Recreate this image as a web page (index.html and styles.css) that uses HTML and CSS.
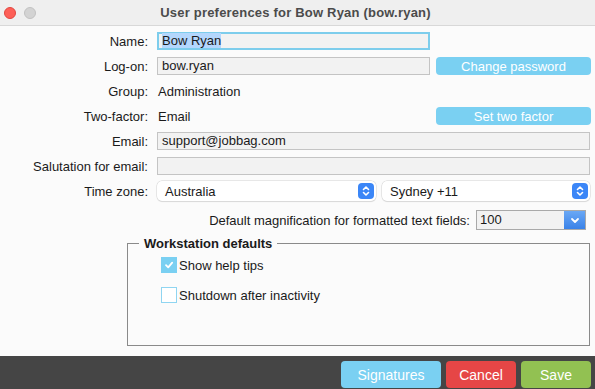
FILE: index.html
```html
<!DOCTYPE html>
<html lang="en">
<head>
    <meta charset="UTF-8">
    <title>User preferences</title>
    <link rel="stylesheet" href="styles.css">
</head>
<body>
    <div class="window">
        <div class="titlebar">
            <div class="lights">
                <span class="light close"></span>
                <span class="light idle"></span>
            </div>
            <div class="title">User preferences for Bow Ryan (bow.ryan)</div>
        </div>

        <div class="content">
            <div class="row">
                <label class="label">Name:</label>
                <div class="field short focused"><span class="selected">Bow Ryan</span></div>
            </div>
            <div class="row">
                <label class="label">Log-on:</label>
                <div class="field short">bow.ryan</div>
                <button class="btn blue side">Change password</button>
            </div>
            <div class="row">
                <label class="label">Group:</label>
                <div class="value">Administration</div>
            </div>
            <div class="row">
                <label class="label">Two-factor:</label>
                <div class="value short">Email</div>
                <button class="btn blue side">Set two factor</button>
            </div>
            <div class="row">
                <label class="label">Email:</label>
                <div class="field wide">support@jobbag.com</div>
            </div>
            <div class="row">
                <label class="label">Salutation for email:</label>
                <div class="field wide"></div>
            </div>
            <div class="row tz">
                <label class="label">Time zone:</label>
                <div class="popup region">
                    <span>Australia</span>
                    <span class="stepper">
                        <svg width="8" height="12" viewBox="0 0 8 12"><path d="M1.5 4.5 L4 2 L6.5 4.5 M1.5 7.5 L4 10 L6.5 7.5" fill="none" stroke="#fff" stroke-width="1.6" stroke-linecap="round" stroke-linejoin="round"/></svg>
                    </span>
                </div>
                <div class="popup city">
                    <span>Sydney +11</span>
                    <span class="stepper">
                        <svg width="8" height="12" viewBox="0 0 8 12"><path d="M1.5 4.5 L4 2 L6.5 4.5 M1.5 7.5 L4 10 L6.5 7.5" fill="none" stroke="#fff" stroke-width="1.6" stroke-linecap="round" stroke-linejoin="round"/></svg>
                    </span>
                </div>
            </div>
            <div class="row magnify">
                <label>Default magnification for formatted text fields:</label>
                <div class="combo">
                    <span class="combo-value">100</span>
                    <span class="combo-arrow">
                        <svg width="10" height="7" viewBox="0 0 10 7"><path d="M2 2 L5 5 L8 2" fill="none" stroke="#fff" stroke-width="1.8" stroke-linecap="round" stroke-linejoin="round"/></svg>
                    </span>
                </div>
            </div>

            <fieldset class="group">
                <legend>Workstation defaults</legend>
                <div class="check">
                    <span class="box checked">
                        <svg width="12" height="12" viewBox="0 0 12 12"><path d="M3 6.2 L5.2 8.4 L9.2 3.6" fill="none" stroke="#fff" stroke-width="1.8" stroke-linecap="round" stroke-linejoin="round"/></svg>
                    </span>
                    <span>Show help tips</span>
                </div>
                <div class="check">
                    <span class="box"></span>
                    <span>Shutdown after inactivity</span>
                </div>
            </fieldset>
        </div>

        <div class="footer">
            <button class="btn blue foot sig">Signatures</button>
            <button class="btn red foot">Cancel</button>
            <button class="btn green foot">Save</button>
        </div>
    </div>
</body>
</html>
```

FILE: styles.css
```css
:root {
    --accent: #7ad0f2;
    --field-bg: #f2f2f2;
    --field-border: #c4c4c4;
    --text-color: #1a1a1a;
}
body {
    margin: 0;
    padding: 0;
    font-family: 'Liberation Sans', Arial, sans-serif;
    font-size: 13px;
    color: var(--text-color);
    background: #fbfbfb;
}
.window {
    width: 595px;
    height: 389px;
    display: flex;
    flex-direction: column;
    overflow: hidden;
}
.titlebar {
    height: 25px;
    flex: 0 0 25px;
    background: #efefef;
    border-bottom: 1px solid #d8d8d8;
    display: flex;
    align-items: center;
}
.lights {
    display: flex;
    gap: 8px;
    padding-left: 4px;
}
.light {
    width: 12px;
    height: 12px;
    border-radius: 50%;
    box-sizing: border-box;
}
.light.close {
    background: #fd5f57;
    border: 1px solid #e2463f;
}
.light.idle {
    background: #d3d3d3;
    border: 1px solid #c2c2c2;
}
.title {
    flex: 1;
    text-align: center;
    font-weight: bold;
    color: #4b4b4b;
    margin-right: 40px;
    font-size: 13px;
    letter-spacing: 0.2px;
}
.content {
    flex: 1;
    padding-top: 6px;
    display: flex;
    flex-direction: column;
}
.row {
    display: flex;
    align-items: center;
    height: 18px;
    margin-bottom: 7px;
}
.label {
    width: 148px;
    text-align: right;
    margin-right: 9px;
    flex: 0 0 148px;
}
.field {
    height: 18px;
    box-sizing: border-box;
    background: var(--field-bg);
    border: 1px solid var(--field-border);
    padding: 0 4px;
    line-height: 16px;
}
.field.short {
    width: 273px;
}
.field.wide {
    width: 433px;
}
.field.focused {
    border: 2px solid #7dcdec;
    line-height: 14px;
    padding: 0 3px;
}
.selected {
    background: #b4d7fd;
}
.value {
    padding-left: 1px;
}
.value.short {
    width: 272px;
}
.btn {
    border: none;
    color: #fff;
    font-family: 'Liberation Sans', Arial, sans-serif;
    border-radius: 4px;
    padding: 0;
    cursor: pointer;
}
.btn.blue {
    background: var(--accent);
}
.btn.red {
    background: #e64646;
}
.btn.green {
    background: #92c152;
}
.btn.side {
    width: 155px;
    height: 18px;
    margin-left: 6px;
    font-size: 13px;
}
.tz {
    height: 20px;
    margin-top: -1px;
    margin-bottom: 9px;
}
.popup {
    height: 20px;
    box-sizing: border-box;
    background: #fff;
    border-radius: 5px;
    box-shadow: 0 0 0 0.5px #d4d4d4, 0 1px 1px rgba(0, 0, 0, 0.12);
    display: flex;
    align-items: center;
    justify-content: space-between;
    padding: 0 2px 0 8px;
}
.popup.region {
    width: 219px;
}
.popup.city {
    width: 208px;
    margin-left: 6px;
}
.stepper {
    width: 16px;
    height: 16px;
    border-radius: 4px;
    background: #3b86f7;
    display: flex;
    align-items: center;
    justify-content: center;
}
.magnify {
    justify-content: flex-end;
    padding-right: 9px;
    height: 20px;
    margin-bottom: 0;
}
.combo {
    width: 110px;
    height: 20px;
    margin-left: 6px;
    box-sizing: border-box;
    background: var(--field-bg);
    border: 1px solid #a9a9a9;
    display: flex;
}
.combo-value {
    flex: 1;
    padding-left: 3px;
    line-height: 18px;
}
.combo-arrow {
    width: 21px;
    background: linear-gradient(#6aa8f5, #3a82e8);
    display: flex;
    align-items: center;
    justify-content: center;
}
.group {
    margin: 6px 5px 0 127px;
    height: 110px;
    box-sizing: border-box;
    border: 1px solid #8a8a8a;
    padding: 6px 0 0 33px;
}
.group legend {
    font-weight: bold;
    padding: 0 5px;
    margin-left: -22px;
}
.check {
    display: flex;
    align-items: center;
    gap: 2px;
    height: 16px;
    margin-bottom: 14px;
}
.box {
    width: 16px;
    height: 16px;
    box-sizing: border-box;
    border: 1px solid #8fd5f1;
    background: #fff;
    display: flex;
    align-items: center;
    justify-content: center;
}
.box.checked {
    background: var(--accent);
    border-color: var(--accent);
}
.footer {
    flex: 0 0 33px;
    background: #454545;
    display: flex;
    justify-content: flex-end;
    align-items: flex-end;
    gap: 5px;
    padding-right: 4px;
    margin-top: auto;
}
.btn.foot {
    width: 70px;
    height: 27px;
    font-size: 14px;
    margin-bottom: 1px;
}
.btn.foot.sig {
    width: 100px;
}
```
